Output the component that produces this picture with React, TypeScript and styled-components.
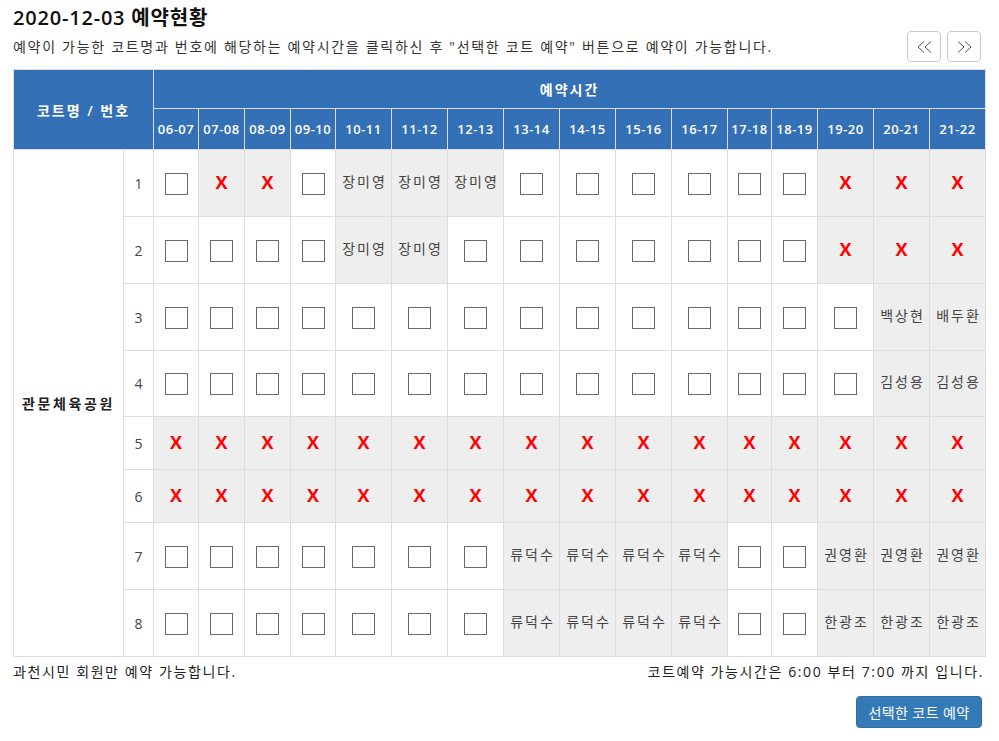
import * as React from 'react';
import styled, { createGlobalStyle } from 'styled-components';

const GlobalStyle = createGlobalStyle`
  html, body {
    margin: 0;
    padding: 0;
    background: #ffffff;
  }
  body {
    font-family: 'Open Sans', 'Noto Sans CJK KR', sans-serif;
    color: #333333;
  }
`;

const Page = styled.div`
  width: 971px;
  padding: 4px 15px 0 13px;
`;

const Title = styled.h2`
  margin: 0;
  height: 27px;
  font-size: 20px;
  line-height: 27px;
  font-weight: 600;
  color: #111111;
  letter-spacing: 0.8px;
`;

const TopRow = styled.div`
  display: flex;
  align-items: center;
  justify-content: space-between;
  height: 31px;
`;

const Desc = styled.p`
  margin: 0;
  font-size: 14px;
  line-height: 20px;
  letter-spacing: 1.7px;
  color: #333333;
`;

const NavGroup = styled.div`
  display: flex;
  gap: 6px;
  margin-right: 3px;
`;

const NavButton = styled.button`
  width: 34px;
  height: 31px;
  padding: 0;
  display: flex;
  align-items: center;
  justify-content: center;
  background: #ffffff;
  border: 1px solid #cccccc;
  border-radius: 4px;
  cursor: pointer;
`;

const Table = styled.table`
  margin-top: 7px;
  width: 972px;
  table-layout: fixed;
  border-collapse: collapse;
  border: 1px solid #dddddd;
  font-size: 14px;
`;

const Col = styled.col<{ $w: number }>`
  width: ${(p) => p.$w}px;
`;

const HeadRow = styled.tr<{ $h: number }>`
  height: ${(p) => p.$h}px;
`;

const HeadCell = styled.th<{ $wide?: boolean }>`
  background: #3370b5;
  color: #ffffff;
  border: 1px solid #dddddd;
  padding: 0;
  font-size: ${(p) => (p.$wide ? '14px' : '13px')};
  font-weight: 600;
  text-align: center;
  vertical-align: middle;
  letter-spacing: ${(p) => (p.$wide ? '2px' : '0.5px')};
`;

const BodyRow = styled.tr<{ $h: number }>`
  height: ${(p) => p.$h}px;
`;

const CourtCell = styled.td`
  border: 1px solid #dddddd;
  text-align: center;
  font-weight: 700;
  font-size: 14px;
  letter-spacing: 2.6px;
  color: #222222;
`;

const NumCell = styled.td`
  border: 1px solid #dddddd;
  text-align: center;
  color: #444444;
  font-size: 14px;
`;

const SlotCell = styled.td<{ $taken: boolean; $name?: boolean }>`
  border: 1px solid #dddddd;
  padding: 0 0 ${(p) => (p.$name ? '5px' : '0')} ${(p) => (p.$name ? '2px' : '0')};
  text-align: center;
  vertical-align: middle;
  background: ${(p) => (p.$taken ? '#eeeeee' : '#ffffff')};
  color: #444444;
  font-size: 14px;
  letter-spacing: ${(p) => (p.$name ? '2px' : '0')};
  white-space: nowrap;
`;

const CheckBox = styled.span`
  display: inline-block;
  box-sizing: border-box;
  width: 23px;
  height: 22px;
  border: 1px solid #6a6a6a;
  background: #ffffff;
  vertical-align: middle;
  margin-top: 1px;
`;

const Closed = styled.span`
  color: #ff0000;
  font-weight: 700;
  font-size: 18px;
  line-height: 1;
`;

const Footer = styled.div`
  display: flex;
  justify-content: space-between;
  margin-top: 5px;
  font-size: 14px;
  line-height: 20px;
  letter-spacing: 1.6px;
  color: #222222;
`;

const Actions = styled.div`
  display: flex;
  justify-content: flex-end;
  margin-top: 14px;
`;

const ReserveButton = styled.button`
  width: 126px;
  height: 32px;
  margin-right: 2px;
  background: #337ab7;
  color: #ffffff;
  border: 1px solid #2e6da4;
  border-radius: 4px;
  font-family: 'Open Sans', 'Noto Sans CJK KR', sans-serif;
  font-size: 14px;
  letter-spacing: 0.4px;
  cursor: pointer;
`;

const times = [
  '06-07', '07-08', '08-09', '09-10', '10-11', '11-12', '12-13', '13-14',
  '14-15', '15-16', '16-17', '17-18', '18-19', '19-20', '20-21', '21-22',
];
const widths = [45, 46, 46, 45, 56, 56, 56, 56, 56, 56, 56, 44, 46, 56, 56, 56];

// '' = 예약 가능, 'X' = 마감, 그 외 = 예약자 이름
const B = '';
const X = 'X';
const courts: { no: number; h: number; slots: string[] }[] = [
  { no: 1, h: 67, slots: [B, X, X, B, '장미영', '장미영', '장미영', B, B, B, B, B, B, X, X, X] },
  { no: 2, h: 67, slots: [B, B, B, B, '장미영', '장미영', B, B, B, B, B, B, B, X, X, X] },
  { no: 3, h: 67, slots: [B, B, B, B, B, B, B, B, B, B, B, B, B, B, '백상현', '배두환'] },
  { no: 4, h: 66, slots: [B, B, B, B, B, B, B, B, B, B, B, B, B, B, '김성용', '김성용'] },
  { no: 5, h: 53, slots: Array(16).fill(X) },
  { no: 6, h: 53, slots: Array(16).fill(X) },
  { no: 7, h: 67, slots: [B, B, B, B, B, B, B, '류덕수', '류덕수', '류덕수', '류덕수', B, B, '권영환', '권영환', '권영환'] },
  { no: 8, h: 67, slots: [B, B, B, B, B, B, B, '류덕수', '류덕수', '류덕수', '류덕수', B, B, '한광조', '한광조', '한광조'] },
];

const Chevrons = ({ dir }: { dir: 'left' | 'right' }) => (
  <svg width="15" height="12" viewBox="0 0 15 12" fill="none" stroke="#555" strokeWidth="1">
    {dir === 'left' ? (
      <>
        <polyline points="7,0.5 1,6 7,11.5" />
        <polyline points="14,0.5 8,6 14,11.5" />
      </>
    ) : (
      <>
        <polyline points="1,0.5 7,6 1,11.5" />
        <polyline points="8,0.5 14,6 8,11.5" />
      </>
    )}
  </svg>
);

const Slot = ({ value }: { value: string }) => {
  if (value === B) {
    return (
      <SlotCell $taken={false}>
        <CheckBox />
      </SlotCell>
    );
  }
  if (value === X) {
    return (
      <SlotCell $taken>
        <Closed>X</Closed>
      </SlotCell>
    );
  }
  return (
    <SlotCell $taken $name>
      {value}
    </SlotCell>
  );
};

const App = () => {
  return (
    <>
      <GlobalStyle />
      <Page>
        <Title>2020-12-03 예약현황</Title>
        <TopRow>
          <Desc>
            예약이 가능한 코트명과 번호에 해당하는 예약시간을 클릭하신 후 "선택한 코트 예약" 버튼으로 예약이 가능합니다.
          </Desc>
          <NavGroup>
            <NavButton aria-label="이전">
              <Chevrons dir="left" />
            </NavButton>
            <NavButton aria-label="다음">
              <Chevrons dir="right" />
            </NavButton>
          </NavGroup>
        </TopRow>

        <Table>
          <colgroup>
            <Col $w={110} />
            <Col $w={30} />
            {widths.map((w, i) => (
              <Col key={i} $w={w} />
            ))}
          </colgroup>
          <thead>
            <HeadRow $h={39}>
              <HeadCell $wide colSpan={2} rowSpan={2}>
                코트명 / 번호
              </HeadCell>
              <HeadCell $wide colSpan={16}>
                예약시간
              </HeadCell>
            </HeadRow>
            <HeadRow $h={41}>
              {times.map((t) => (
                <HeadCell key={t}>{t}</HeadCell>
              ))}
            </HeadRow>
          </thead>
          <tbody>
            {courts.map((c, i) => (
              <BodyRow key={c.no} $h={c.h}>
                {i === 0 && <CourtCell rowSpan={courts.length}>관문체육공원</CourtCell>}
                <NumCell>{c.no}</NumCell>
                {c.slots.map((s, j) => (
                  <Slot key={j} value={s} />
                ))}
              </BodyRow>
            ))}
          </tbody>
        </Table>

        <Footer>
          <span>과천시민 회원만 예약 가능합니다.</span>
          <span>코트예약 가능시간은 6:00 부터 7:00 까지 입니다.</span>
        </Footer>
        <Actions>
          <ReserveButton>선택한 코트 예약</ReserveButton>
        </Actions>
      </Page>
    </>
  );
};

export default App;
